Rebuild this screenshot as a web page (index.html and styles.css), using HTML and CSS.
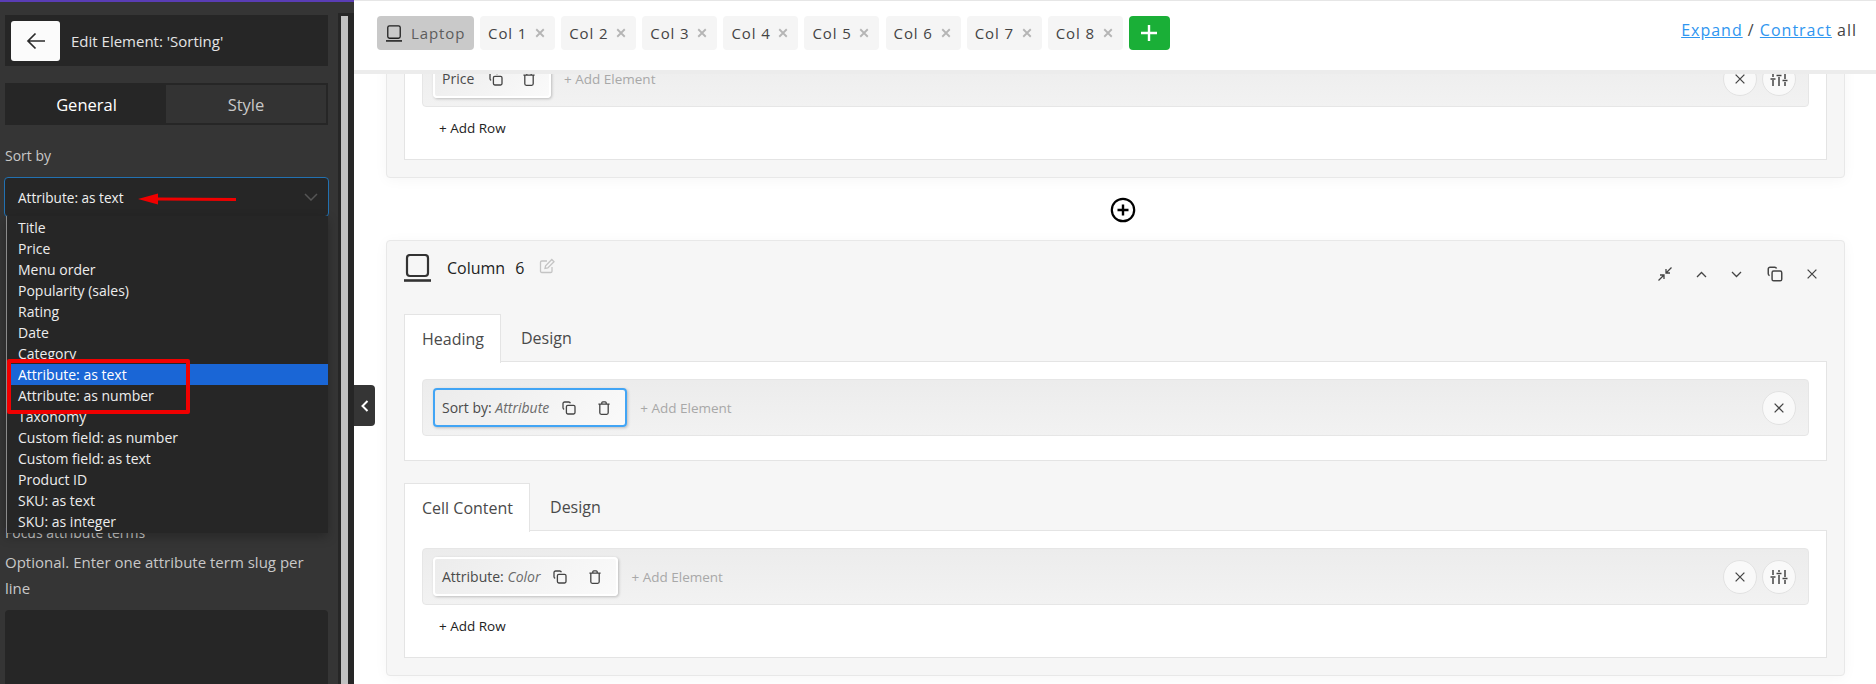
FILE: index.html
```html
<!DOCTYPE html>
<html lang="en">
<head>
<meta charset="utf-8">
<title>Edit Element: 'Sorting'</title>
<link rel="stylesheet" href="styles.css">
</head>
<body>
<svg class="defs" width="0" height="0" aria-hidden="true">
  <symbol id="i-copy" viewBox="0 0 16 16"><path d="M3.2 9.4C2.4 9.1 2 8.5 2 7.8V3.6C2 2.7 2.7 2 3.6 2h4.2c.7 0 1.3.4 1.6 1.2" fill="none" stroke="currentColor" stroke-width="1.3"/><rect x="5.4" y="5.4" width="8.6" height="8.6" rx="1.4" fill="none" stroke="currentColor" stroke-width="1.3"/></symbol>
  <symbol id="i-trash" viewBox="0 0 16 16"><path d="M2.4 4.2h11.2M5.8 4V2.8c0-.6.4-1 1-1h2.4c.6 0 1 .4 1 1V4M3.8 4.2v8.6c0 .9.6 1.5 1.5 1.5h5.4c.9 0 1.5-.6 1.5-1.5V4.2" fill="none" stroke="currentColor" stroke-width="1.3"/></symbol>
  <symbol id="i-x" viewBox="0 0 16 16"><path d="M3 3l10 10M13 3L3 13" fill="none" stroke="currentColor"/></symbol>
  <symbol id="i-sliders" viewBox="0 0 18 16"><path d="M3 1v5M3 9v6M9 1v2M9 6v9M15 1v7M15 11v4M.5 8h5M6.5 4.5h5M12.5 9.5h5" fill="none" stroke="currentColor" stroke-width="1.5"/></symbol>
  <symbol id="i-laptop" viewBox="0 0 27 28"><rect x="3" y="1" width="21" height="21" rx="3" fill="none" stroke="currentColor" stroke-width="2.2"/><path d="M0 26.5h27" fill="none" stroke="currentColor" stroke-width="2.6"/></symbol>
</svg>

<div class="app">
  <aside class="sidebar">
    <div class="side-scroll">
      <header class="side-head">
        <button class="back" type="button" aria-label="Back">
          <svg width="20" height="18" viewBox="0 0 20 18"><path d="M19 9H2M9.500 1.500L2 9l7.500 7.500" fill="none" stroke="#2b2b2b" stroke-width="1.700"/></svg>
        </button>
        <span class="side-title">Edit Element: 'Sorting'</span>
      </header>
      <div class="side-tabs">
        <div class="side-tab side-tab-on">General</div>
        <div class="side-tab side-tab-off">Style</div>
      </div>
      <div class="field-label">Sort by</div>
      <div class="select-wrap">
        <div class="select">
          <span>Attribute: as text</span>
          <svg class="select-arrow" width="14" height="8" viewBox="0 0 14 8"><path d="M1 1l6 6 6-6" fill="none" stroke="#555" stroke-width="1.500"/></svg>
        </div>
        <svg class="red-arrow" width="100" height="14" viewBox="0 0 100 14"><path d="M0 7L20 1.500V5.500L98 6V9L20 8.500V12.500Z" fill="#f00000"/></svg>
        <ul class="options">
          <li>Title</li>
          <li>Price</li>
          <li>Menu order</li>
          <li>Popularity (sales)</li>
          <li>Rating</li>
          <li>Date</li>
          <li>Category</li>
          <li class="option-on">Attribute: as text</li>
          <li>Attribute: as number</li>
          <li>Taxonomy</li>
          <li>Custom field: as number</li>
          <li>Custom field: as text</li>
          <li>Product ID</li>
          <li>SKU: as text</li>
          <li>SKU: as integer</li>
        </ul>
        <div class="red-box"></div>
      </div>
      <div class="field-label focus-label">Focus attribute terms</div>
      <p class="field-help">Optional. Enter one attribute term slug per line</p>
      <div class="textarea"></div>
    </div>
    <div class="scrollbar"><div class="scroll-thumb"></div></div>
    <button class="collapse" type="button" aria-label="Collapse">
      <svg width="8" height="12" viewBox="0 0 8 12"><path d="M6.500 1L1.500 6l5 5" fill="none" stroke="#fff" stroke-width="2"/></svg>
    </button>
  </aside>

  <main class="main">
    <nav class="topbar">
      <div class="device"><svg class="device-icon" width="16" height="17"><use href="#i-laptop"/></svg>Laptop</div>
      <div class="col">Col 1<svg class="col-x" width="12" height="12"><use href="#i-x"/></svg></div>
      <div class="col">Col 2<svg class="col-x" width="12" height="12"><use href="#i-x"/></svg></div>
      <div class="col">Col 3<svg class="col-x" width="12" height="12"><use href="#i-x"/></svg></div>
      <div class="col">Col 4<svg class="col-x" width="12" height="12"><use href="#i-x"/></svg></div>
      <div class="col">Col 5<svg class="col-x" width="12" height="12"><use href="#i-x"/></svg></div>
      <div class="col">Col 6<svg class="col-x" width="12" height="12"><use href="#i-x"/></svg></div>
      <div class="col">Col 7<svg class="col-x" width="12" height="12"><use href="#i-x"/></svg></div>
      <div class="col">Col 8<svg class="col-x" width="12" height="12"><use href="#i-x"/></svg></div>
      <button class="add-col" type="button" aria-label="Add column"><svg width="18" height="18" viewBox="0 0 18 18"><path d="M9 1v16M1 9h16" stroke="#fff" stroke-width="2.400"/></svg></button>
      <div class="expand"><a href="#">Expand</a> / <a href="#">Contract</a> all</div>
    </nav>

    <div class="canvas">
      <section class="panel panel-cut">
        <div class="card card-flat">
          <div class="row">
            <div class="element element-price">Price
              <svg class="el-icon"><use href="#i-copy"/></svg>
              <svg class="el-icon"><use href="#i-trash"/></svg>
            </div>
            <span class="add-el">+ Add Element</span>
            <span class="circle"><svg class="circle-x" width="14" height="14"><use href="#i-x"/></svg></span>
            <span class="circle"><svg width="18" height="16"><use href="#i-sliders"/></svg></span>
          </div>
          <div class="add-row">+ Add Row</div>
        </div>
      </section>

      <div class="add-col-between">
        <svg width="26" height="26" viewBox="0 0 26 26"><circle cx="13" cy="13" r="11.200" fill="#fff" stroke="#000" stroke-width="2.200"/><path d="M13 7.500v11M7.500 13h11" stroke="#000" stroke-width="2.400"/></svg>
      </div>

      <section class="panel">
        <header class="panel-head">
          <svg class="panel-icon" width="27" height="28"><use href="#i-laptop"/></svg>
          <span class="panel-title">Column <span class="panel-num">6</span></span>
          <svg class="edit-icon" width="16" height="16" viewBox="0 0 16 16"><path d="M13 9v4.200c0 .8-.6 1.300-1.300 1.300H2.800c-.8 0-1.300-.5-1.300-1.300V4.300C1.500 3.500 2 3 2.800 3H8M6 10.500l.6-2.800L12.800 1.500l2.200 2.200-6.200 6.200z" fill="none" stroke="#c4c4c4" stroke-width="1.300"/></svg>
          <div class="panel-tools">
            <svg width="14" height="14" viewBox="0 0 14 14"><path d="M13.500.500L8 6M8 2v4h4M.500 13.500L6 8M6 12V8H2" fill="none" stroke="#444" stroke-width="1.300"/></svg>
            <svg width="11" height="7" viewBox="0 0 11 7"><path d="M1 6l4.500-4.500L10 6" fill="none" stroke="#444" stroke-width="1.300"/></svg>
            <svg width="11" height="7" viewBox="0 0 11 7"><path d="M1 1l4.500 4.500L10 1" fill="none" stroke="#444" stroke-width="1.300"/></svg>
            <svg class="tool-copy" width="18" height="18"><use href="#i-copy"/></svg>
            <svg class="tool-x circle-x" width="14" height="14"><use href="#i-x"/></svg>
          </div>
        </header>

        <div class="tabs">
          <div class="tab tab-on">Heading</div>
          <div class="tab">Design</div>
        </div>
        <div class="card">
          <div class="row">
            <div class="element element-sel"><span>Sort by: <em>Attribute</em></span>
              <svg class="el-icon"><use href="#i-copy"/></svg>
              <svg class="el-icon"><use href="#i-trash"/></svg>
            </div>
            <span class="add-el">+ Add Element</span>
            <span class="circle"><svg class="circle-x" width="14" height="14"><use href="#i-x"/></svg></span>
          </div>
        </div>

        <div class="tabs tabs-second">
          <div class="tab tab-on">Cell Content</div>
          <div class="tab">Design</div>
        </div>
        <div class="card card-flat">
          <div class="row">
            <div class="element"><span>Attribute: <em>Color</em></span>
              <svg class="el-icon"><use href="#i-copy"/></svg>
              <svg class="el-icon"><use href="#i-trash"/></svg>
            </div>
            <span class="add-el">+ Add Element</span>
            <span class="circle"><svg class="circle-x" width="14" height="14"><use href="#i-x"/></svg></span>
            <span class="circle"><svg width="18" height="16"><use href="#i-sliders"/></svg></span>
          </div>
          <div class="add-row">+ Add Row</div>
        </div>
      </section>
    </div>
  </main>
</div>
</body>
</html>
```

FILE: styles.css
```css
* { box-sizing: border-box; }
html, body { margin: 0; height: 100%; overflow: hidden; }
body { font-family: "Open Sans", "Noto Sans", sans-serif; background: #fff; color: #333; }
.defs { position: absolute; }
button { border: 0; padding: 0; cursor: pointer; font: inherit; }
a { color: #2f96f0; }

.app { display: flex; height: 684px; }

/* Sidebar */
.sidebar { position: relative; flex: 0 0 354px; height: 684px; display: flex; background: #353535; border-top: 2px solid #5a3db5; overflow: visible; }
.side-scroll { flex: 0 0 338px; padding: 13px 10px 0 5px; height: 682px; overflow: hidden; }
.side-head { display: flex; align-items: center; height: 51px; padding-left: 6px; background: #262626; }
.back { display: flex; align-items: center; justify-content: center; width: 49px; height: 40px; background: #fbfbfb; border-radius: 3px; }
.side-title { margin-left: 11px; font-size: 15px; color: #e4e4e4; }
.side-tabs { display: flex; margin-top: 17px; height: 42px; padding: 2px; background: #262626; }
.side-tab { flex: 1; display: flex; align-items: center; justify-content: center; font-size: 16.5px; }
.side-tab-on { color: #fff; }
.side-tab-off { flex: 0 0 160px; background: #333; color: #c8c8c8; }
.field-label { margin-top: 21px; font-size: 14px; line-height: 20px; color: #c8c8c8; }
.select-wrap { position: relative; margin-top: 11px; }
.select { display: flex; align-items: center; justify-content: space-between; margin: 0 -1px; height: 40px; padding: 0 10px 0 13px; background: #262626; border: 1px solid #2271b1; border-radius: 4px; font-size: 13.6px; color: #f0f0f0; }
.red-arrow { position: absolute; left: 133px; top: 15px; }
.options { position: absolute; left: 1px; right: 0; top: 39px; margin: 0; padding: 1px 0 0 4px; list-style: none; height: 317px; background: #262626; border-left: 1px solid #8a8a8a; box-shadow: 0 4px 10px rgba(0,0,0,.25); overflow: hidden; }
.options li { height: 21px; margin-left: -4px; padding-left: 11px; font-size: 14px; line-height: 21px; color: #ededed; white-space: nowrap; }
.options .option-on { margin-left: 0; padding-left: 7px; background: #1a66d6; color: #fff; }
.red-box { position: absolute; left: 2px; top: 182px; width: 183px; height: 55px; border: 4px solid #f00000; border-radius: 2px; }
.focus-label { margin-top: 306px; }
.field-help { max-width: 310px; margin: 6px 0 0; font-size: 15px; line-height: 26px; color: #c8c8c8; }
.textarea { margin-top: 9px; height: 90px; background: #262626; border-radius: 4px; }
.scrollbar { flex: 0 0 16px; margin-top: 11px; padding: 3px 6px 0 3px; background: #262626; }
.scroll-thumb { height: 100%; background: #c1c1c1; }
.collapse { position: absolute; left: 100%; top: 383px; display: flex; align-items: center; justify-content: center; width: 21px; height: 41px; background: #353535; border-radius: 0 4px 4px 0; z-index: 3; }

/* Main */
.main { flex: 1; min-width: 0; height: 684px; overflow: hidden; }
.topbar { position: relative; z-index: 2; display: flex; align-items: flex-start; gap: 6.1px; height: 74px; padding: 15px 19px 0 23px; background: #fff; border-top: 1px solid #e6e6e6; border-bottom: 4px solid #ececec; }
.device, .col { display: flex; align-items: center; height: 34px; border-radius: 4px; font-size: 15px; letter-spacing: .9px; color: #444; }
.device { width: 97px; padding-left: 9px; gap: 9px; background: #c9c9c9; color: #5c5c5c; }
.device-icon { color: #1f1f1f; }
.col { justify-content: space-between; width: 75px; padding: 0 9px 0 8px; background: #f5f5f5; }
.col-x { color: #b5b5b5; stroke-width: 2.4; }
.circle-x { stroke-width: 1.5; }
.add-col { display: flex; align-items: center; justify-content: center; width: 41px; height: 34px; background: #1aaf37; border-radius: 4px; }
.expand { margin: 3px 0 0 auto; font-size: 16px; letter-spacing: 1px; color: #444; }

.canvas { padding: 0 31px 0 32px; }
.panel { padding: 0 17px 17px; background: #f6f6f6; border: 1px solid #e8e8e8; border-radius: 4px; box-shadow: 0 2px 14px rgba(0,0,0,.04); }
.panel-cut { margin-top: -60px; padding-top: 18px; }
.card { padding: 17px 17px 24px; background: #fff; border: 1px solid #e4e4e4; margin-top: -1px; }
.card-flat { padding-bottom: 19px; }
.row { display: flex; align-items: center; height: 57px; padding: 0 12px 0 10px; background: linear-gradient(#ececec, #f2f2f2); border: 1px solid #e6e6e6; border-radius: 4px; }
.element { display: flex; align-items: center; height: 39px; padding: 0 13px 0 7px; background: linear-gradient(135deg, #ececec, #fafafa); border: 2px solid #fff; border-radius: 4px; box-shadow: 1px 1px 3px rgba(0,0,0,.22); font-size: 14px; color: #4a4a4a; }
.element em { color: #6b6b6b; }
.element-sel { border-color: #42a5f5; }
.element-price { flex: 0 0 118px; padding-right: 0; }
.el-icon { flex: none; width: 16px; height: 16px; margin-left: 12px; color: #444; }
.el-icon + .el-icon { margin-left: 19px; }
.element-price .el-icon { margin-left: 14px; }
.element-price .el-icon + .el-icon { margin-left: 17px; }
.add-el { margin-left: 13px; margin-right: auto; font-size: 13.5px; color: #a8a8a8; }
.circle { display: flex; align-items: center; justify-content: center; width: 34px; height: 34px; margin-left: 5px; background: #f9f9f9; border: 1px solid #e2e2e2; border-radius: 50%; color: #444; }
.add-row { margin: 9px 0 0 17px; font-size: 13.5px; line-height: 24px; color: #222; }

.add-col-between { display: flex; justify-content: center; align-items: center; height: 62px; padding: 2px 0 0 14px; }

.panel-head { display: flex; align-items: flex-start; height: 73px; padding-top: 13px; }
.panel-icon { color: #333; }
.panel-title { margin: 2px 0 0 16px; font-size: 16px; line-height: 24px; color: #222; }
.panel-num { margin-left: 6px; }
.edit-icon { margin: 4px 0 0 14px; }
.panel-tools { display: flex; align-items: center; gap: 24px; margin: 8px 8px 0 auto; height: 24px; color: #444; }
.tool-copy { color: #444; }
.tool-x { margin-left: -3px; color: #444; }

.tabs { display: flex; position: relative; z-index: 1; height: 48px; }
.tabs-second { margin-top: 22px; }
.tab { display: flex; align-items: center; padding: 0 20px; font-size: 16px; color: #4a4a4a; }
.tab-on { padding: 0 16px 0 17px; height: 49px; background: #fff; border: 1px solid #e4e4e4; border-bottom: 0; }
```
